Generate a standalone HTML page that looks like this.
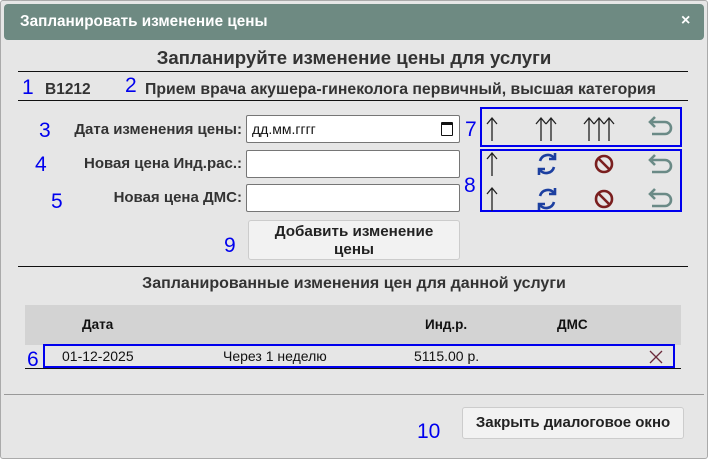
<html><head><style>
body{margin:0;width:708px;height:459px;background:#fff;font-family:"Liberation Sans",sans-serif;position:relative;overflow:hidden}
.a{position:absolute}
.n{position:absolute;color:#0000ee;font-size:21px}
.b{font-weight:bold;color:#333;font-size:15.5px}
.lbl{position:absolute;right:466px;font-weight:bold;color:#333;font-size:15px}
.inp{position:absolute;left:246px;width:212px;height:26px;background:#fff;border:1px solid #767676;border-radius:2px}
</style></head><body>
<div class="a" style="left:0;top:0;width:708px;height:459px;background:#e6e6e6;border:1px solid #aaa;box-sizing:border-box;border-radius:3px"></div>
<div class="a" style="left:4px;top:4px;width:700px;height:36px;background:#6e8a82;border-radius:4px"></div>
<div class="a" style="left:20px;top:13px;color:#fff;font-weight:bold;font-size:15.3px">Запланировать изменение цены</div>
<div class="a" style="left:681px;top:12px;color:#fff;font-weight:bold;font-size:16px">×</div>
<div class="a" style="left:0;width:708px;top:47px;text-align:center;font-weight:bold;font-size:18.6px;color:#333">Запланируйте изменение цены для услуги</div>
<div class="a" style="left:18px;top:71px;width:670px;height:1px;background:#111"></div>
<div class="n" style="left:22px;top:76px">1</div>
<div class="a b" style="left:45px;top:81px">B1212</div>
<div class="n" style="left:125px;top:74px">2</div>
<div class="a b" style="left:145px;top:81px;font-size:15.8px">Прием врача акушера-гинеколога первичный, высшая категория</div>
<div class="a" style="left:18px;top:100px;width:670px;height:1px;background:#111"></div>
<div class="n" style="left:39px;top:119px">3</div>
<div class="lbl" style="top:121px">Дата изменения цены:</div>
<div class="inp" style="top:115px"><span style="position:absolute;left:5px;top:5px;font-size:14px;color:#111">дд.мм.гггг</span><span style="position:absolute;right:6px;top:6px;width:10px;height:10px;border:1.5px solid #111;border-top-width:3px;border-radius:1px"></span></div>
<div class="n" style="left:35px;top:153px">4</div>
<div class="lbl" style="top:155px">Новая цена Инд.рас.:</div>
<div class="inp" style="top:150px"></div>
<div class="n" style="left:51px;top:190px">5</div>
<div class="lbl" style="top:189px">Новая цена ДМС:</div>
<div class="inp" style="top:184px"></div>
<div class="a" style="left:248px;top:220px;width:212px;height:40px;background:#f2f2f2;border:1px solid #ccc;border-radius:3px;text-align:center;font-weight:bold;font-size:15.2px;color:#222;line-height:18px;padding-top:2px;box-sizing:border-box">Добавить изменение<br>цены</div>
<div class="n" style="left:224px;top:234px">9</div>
<div class="n" style="left:465px;top:118px">7</div>
<div class="n" style="left:464px;top:174px">8</div>
<div class="a" style="left:480px;top:107px;width:202px;height:40px;border:2px solid #0000ee;box-sizing:border-box"></div>
<div class="a" style="left:480px;top:149px;width:202px;height:63px;border:2px solid #0000ee;box-sizing:border-box"></div>
<svg class="a" style="left:0;top:0" width="708" height="459">
<g fill="none" stroke="#222" stroke-width="1.3">
<path d="M492 141v-23M487 124l5-6 5 6"/>
<path d="M541 141v-23M536 124l5-6 5 6M551 141v-23M546 124l5-6 5 6"/>
<path d="M589 141v-23M584 124l5-6 5 6M599 141v-23M594 124l5-6 5 6M609 141v-23M604 124l5-6 5 6"/>
<path d="M492 176v-23M487 159l5-6 5 6"/>
<path d="M492 211v-23M487 194l5-6 5 6"/>
</g>
<g fill="none" stroke-width="2.6">
<g stroke="#6a8a86"><path d="M652 122h13a6 6 0 0 1 0 12h-13M655 117l-5 5 5 5"/><path d="M652 160h13a6 6 0 0 1 0 12h-13M655 155l-5 5 5 5"/><path d="M652 194h13a6 6 0 0 1 0 12h-13M655 189l-5 5 5 5"/></g>
<g stroke="#1c3fa0"><path d="M540 161a8 8 0 0 1 14 -3M554 167a8 8 0 0 1-14 3M555 153v6h-6M539 175v-6h6"/><path d="M540 196a8 8 0 0 1 14 -3M554 202a8 8 0 0 1-14 3M555 188v6h-6M539 210v-6h6"/></g>
<g stroke="#7a1f1f"><circle cx="604" cy="164" r="8"/><path d="M598 158l12 12"/><circle cx="604" cy="199" r="8"/><path d="M598 193l12 12"/></g>
</g></svg>
<div class="a" style="left:18px;top:266px;width:670px;height:1px;background:#111"></div>
<div class="a" style="left:0;width:708px;top:275px;text-align:center;font-weight:bold;font-size:16px;color:#333">Запланированные изменения цен для данной услуги</div>
<div class="a" style="left:25px;top:305px;width:656px;height:40px;background:#d3d3d3"></div>
<div class="a" style="left:82px;top:317px;font-weight:bold;font-size:13.5px;color:#111">Дата</div>
<div class="a" style="left:425px;top:317px;font-weight:bold;font-size:13.5px;color:#111">Инд.р.</div>
<div class="a" style="left:557px;top:317px;font-weight:bold;font-size:13.5px;color:#111">ДМС</div>
<div class="a" style="left:43px;top:344px;width:632px;height:24px;border:2px solid #0000ee;box-sizing:border-box"></div>
<div class="a" style="left:62px;top:348px;font-size:14px;color:#111">01-12-2025</div>
<div class="a" style="left:223px;top:348px;font-size:14px;color:#111">Через 1 неделю</div>
<div class="a" style="left:414px;top:348px;font-size:14px;color:#111">5115.00 р.</div>
<svg class="a" style="left:649px;top:350px" width="14" height="14"><path d="M1 1l12 12M13 1L1 13" stroke="#6b2a3a" stroke-width="1.3"/></svg>
<div class="a" style="left:25px;top:368px;width:656px;height:1px;background:#111"></div>
<div class="n" style="left:27px;top:348px">6</div>
<div class="a" style="left:4px;top:394px;width:700px;height:1px;background:#999"></div>
<div class="a" style="left:462px;top:407px;width:222px;height:32px;background:#f2f2f2;border:1px solid #ccc;border-radius:3px;box-sizing:border-box;text-align:center;line-height:30px;font-weight:bold;font-size:15px;color:#222">Закрыть диалоговое окно</div>
<div class="n" style="left:417px;top:420px">10</div>
</body></html>
